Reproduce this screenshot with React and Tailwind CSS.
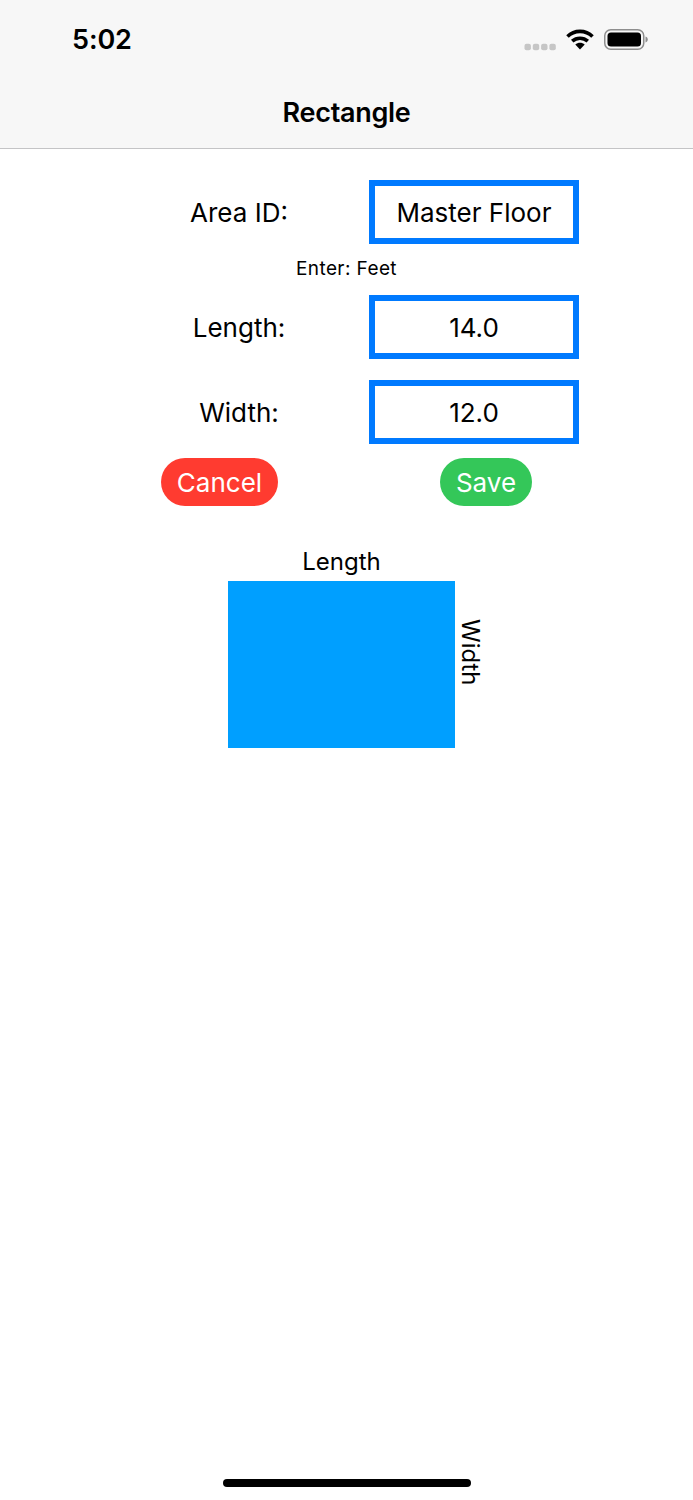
function Field({ label, value }) {
  return (
    <div className="flex h-[64px] items-center">
      <div className="w-[369px] pl-[109px] pt-[1px] text-center text-[26px] leading-none text-black">{label}</div>
      <div className="flex h-[64px] w-[210px] items-center justify-center border-[6px] border-[#007aff] bg-white pt-[1px] text-[26px] leading-none text-black">{value}</div>
    </div>
  );
}

export default function App() {
  return (
    <div className="relative h-[1500px] w-[693px] overflow-hidden bg-white font-['Inter',sans-serif]">
      <header className="h-[149px] border-b border-[#c4c4c6] bg-[#f7f7f7]">
        <div className="flex h-[78px] items-center justify-between pl-[72px] pr-[45px]">
          <span className="pt-[1px] text-[27px] font-semibold leading-none tracking-[-0.1px] text-black">5:02</span>
          <div className="flex items-center">
            <svg width="32" height="8" viewBox="0 0 32 8" className="mt-[15px]">
              <g fill="#c6c6c6">
                <rect x="0.5" y="0.8" width="6.4" height="6.4" rx="2" />
                <rect x="8.8" y="0.8" width="6.4" height="6.4" rx="2" />
                <rect x="17.1" y="0.8" width="6.4" height="6.4" rx="2" />
                <rect x="25.4" y="0.8" width="6.4" height="6.4" rx="2" />
              </g>
            </svg>
            <svg width="28" height="21" viewBox="0 0 28 21" className="ml-[10px] mt-[1px]">
              <path d="M1.5 7.5C8.3.7 19.7.7 26.5 7.5" fill="none" stroke="#000" strokeWidth="3.6" />
              <path d="M6.2 12.2C10.6 8.2 17.4 8.2 21.8 12.2" fill="none" stroke="#000" strokeWidth="3.6" />
              <path d="M9.3 15.6C12 13.2 16 13.2 18.7 15.6L14 20.6Z" fill="#000" />
            </svg>
            <svg width="44" height="21" viewBox="0 0 44 21" className="ml-[10px] mt-[1px]">
              <rect x="0.75" y="0.75" width="39" height="19.5" rx="6" fill="none" stroke="#8e8e8e" strokeWidth="1.5" />
              <rect x="3.5" y="3.5" width="33.5" height="14" rx="3.5" fill="#000" />
              <path d="M41.5 7.5v6c1.4-.4 2.3-1.6 2.3-3s-.9-2.6-2.3-3Z" fill="#8e8e8e" />
            </svg>
          </div>
        </div>
        <div className="flex h-[70px] items-center justify-center pb-[2px] text-[27px] font-semibold leading-none tracking-[-0.3px] text-black">Rectangle</div>
      </header>

      <main className="pt-[31px]">
        <Field label="Area ID:" value="Master Floor" />
        <div className="flex h-[51px] items-center justify-center pb-[2px] text-[19px] leading-none tracking-[0.4px] text-black">Enter: Feet</div>
        <Field label="Length:" value="14.0" />
        <div className="h-[21px]" />
        <Field label="Width:" value="12.0" />

        <div className="mt-[14px] flex h-[48px] items-center">
          <button className="ml-[161px] flex h-[48px] w-[117px] items-center justify-center rounded-full bg-[#ff3b30] pt-[2px] text-[26px] leading-none text-white">Cancel</button>
          <button className="ml-[162px] flex h-[48px] w-[92px] items-center justify-center rounded-full bg-[#34c759] pt-[2px] text-[26px] leading-none text-white">Save</button>
        </div>

        <div className="ml-[228px] mt-[41px] w-[262px]">
          <div className="flex h-[34px] w-[227px] items-center justify-center pb-[5px] text-[24px] leading-none text-black">Length</div>
          <div className="flex items-start">
            <div className="h-[167px] w-[227px] bg-[#009fff]" />
            <div className="ml-[3px] mt-[38px] text-[24px] leading-[24px] text-black [writing-mode:vertical-rl]">Width</div>
          </div>
        </div>
      </main>

      <div className="absolute bottom-[13px] left-[223px] h-[8px] w-[248px] rounded-full bg-black" />
    </div>
  );
}
